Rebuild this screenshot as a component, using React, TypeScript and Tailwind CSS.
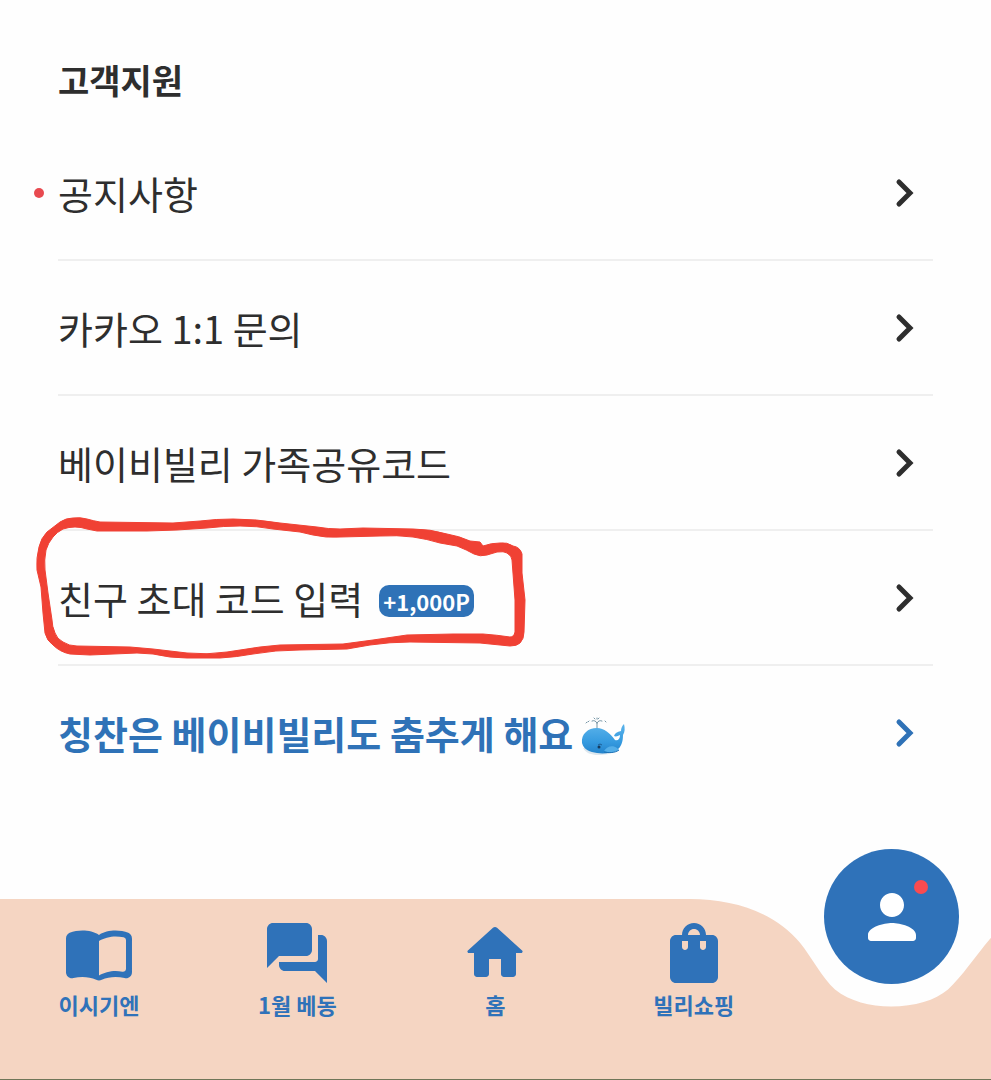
import React from "react";

const WhaleIcon = () => (
	<svg
		viewBox="0 0 44 40"
		className="mt-1.5 ml-2 h-10 w-11 shrink-0"
		role="img"
		aria-label="고래"
	>
		<defs>
			<linearGradient id="whale-body" x1="0" y1="0" x2="0" y2="1">
				<stop offset="0" stopColor="#5bb3ea" />
				<stop offset="0.6" stopColor="#369be0" />
				<stop offset="1" stopColor="#2383cc" />
			</linearGradient>
		</defs>
		<path
			d="M16 12V7M16 7C15 5 13 4 11 5M16 7C17 5 19 4 21 5M8 5l-1 1M24 5l1 1M13 2l1 1M18 2l-1 1M5 7l1-1M16 3V2"
			fill="none"
			stroke="#7796a6"
			strokeWidth="1"
			strokeLinecap="round"
		/>
		<path d="M2 32C5 37 10 39 17 39c7 0 13-1 17-4L24 31z" fill="#dde7ee" />
		<path
			d="M1 27C0 18 7 12 16 12c7 0 13 5 18 12 3 1 5-1 5-5-2 1-4 2-6 1 1-3 3-4 7-5 0-3 1-5 3-7 1 4 1 8-1 11 0 7-2 12-6 15-5 3-13 4-20 3C9 36 3 34 1 27z"
			fill="url(#whale-body)"
		/>
		<path d="M23 35c3-5 9-6 13-3l2 2c-4 3-10 3-15 1z" fill="#54aee8" />
		<path d="M23 36c5 1 11 1 15-2" fill="none" stroke="#1d72b6" />
		<path d="M17 29q2-2 4 0" fill="none" stroke="#1f5f96" />
		<circle cx="18" cy="31" r="1.5" fill="#173b5c" />
	</svg>
);

const ChevronIcon = () => (
	<svg viewBox="0 0 20 30" className="h-[30px] w-5 shrink-0" aria-hidden="true">
		<path
			d="M4 4l11 11L4 26"
			fill="none"
			stroke="currentColor"
			strokeWidth="5"
			strokeLinecap="round"
		/>
	</svg>
);

// hand drawn loop around the invite code row
const MarkerLoop = () => (
	<svg
		viewBox="30 510 500 155"
		className="pointer-events-none absolute -left-7 -top-[21px] h-[155px] w-[500px] max-w-none"
		aria-hidden="true"
	>
		<path
			fill="#f04134"
			stroke="#f04134"
			strokeWidth="1"
			strokeLinejoin="round"
			fillRule="evenodd"
			d="M73 518Q66 518 60 522L47 532Q41 538 39 547 36 558 37 570L41 587 43 613 45 633Q47 641 53 645 60 652 70 654L90 655 137 653 153 654Q170 658 187 658L220 658Q237 657 253 654 275 650 300 650L347 649 370 645Q390 642 410 642L480 643 510 646Q517 646 520 643 524 639 524 632L525 600 522 573V554Q520 547 513 546 507 542 500 543 491 543 483 546L480 542 470 541Q459 536 447 534 430 529 413 529L363 528 340 529Q328 529 317 527L280 523Q256 519 233 519 216 519 200 521L173 523 100 522Q94 521 87 519 80 517 73 518Z
			M75 527Q81 527 87 529L97 531 147 531 177 530 207 528Q224 526 240 526 257 526 273 529L300 532 313 535Q326 538 340 537L380 536Q397 535 413 537 427 539 440 543L457 546Q467 550 474 554 480 557 487 555L497 552Q504 551 507 553 512 556 512 560L515 600V632Q514 637 510 637 497 635 483 634L453 634 407 635 373 640 343 644 280 645 260 647 227 652Q207 655 187 653L153 649 130 647 77 646Q69 646 63 642 57 639 55 633 52 626 52 620L48 593 45 570Q44 560 46 550 48 543 53 537 57 532 63 529 69 527 75 527Z"
		/>
	</svg>
);

const BookIcon = () => (
	<svg viewBox="0 0 24 24" className="size-[72px]" fill="currentColor" aria-hidden="true">
		<path d="M17.5 4.5c-1.95 0-4.05.4-5.5 1.5-1.45-1.1-3.55-1.5-5.5-1.5-1.45 0-2.99.22-4.28.79C1.49 5.62 1 6.33 1 7.14v11.28c0 1.3 1.22 2.26 2.48 1.94.98-.25 2.02-.36 3.02-.36 1.56 0 3.22.26 4.56.92.6.3 1.28.3 1.87 0 1.34-.67 3-.92 4.56-.92 1 0 2.04.11 3.02.36 1.26.33 2.48-.63 2.48-1.94V7.14c0-.81-.49-1.52-1.22-1.85-1.28-.57-2.82-.79-4.27-.79zM21 17.23c0 .63-.58 1.09-1.2.98-.75-.14-1.53-.2-2.3-.2-1.7 0-4.15.65-5.5 1.5V8c1.35-.85 3.8-1.5 5.5-1.5.92 0 1.83.09 2.7.28.46.1.8.51.8.98v9.47z" />
	</svg>
);

const ChatIcon = () => (
	<svg viewBox="0 0 24 24" className="size-[72px]" fill="currentColor" aria-hidden="true">
		<path d="M20 6h-1v8c0 .55-.45 1-1 1H6v1c0 1.1.9 2 2 2h10l4 4V8c0-1.1-.9-2-2-2zm-3 5V4c0-1.1-.9-2-2-2H4c-1.1 0-2 .9-2 2v13l4-4h9c1.1 0 2-.9 2-2z" />
	</svg>
);

const HomeIcon = () => (
	<svg viewBox="0 0 24 24" className="size-[72px]" fill="currentColor" aria-hidden="true">
		<path d="M10 19v-5h4v5c0 .55.45 1 1 1h3c.55 0 1-.45 1-1v-7h1.7c.46 0 .68-.57.33-.87L12.67 3.6c-.38-.34-.96-.34-1.34 0l-8.36 7.53c-.34.3-.13.87.33.87H5v7c0 .55.45 1 1 1h3c.55 0 1-.45 1-1z" />
	</svg>
);

const BagIcon = () => (
	<svg viewBox="0 0 24 24" className="size-[72px]" fill="currentColor" aria-hidden="true">
		<path d="M18 6h-2c0-2.21-1.79-4-4-4S8 3.79 8 6H6c-1.1 0-2 .9-2 2v12c0 1.1.9 2 2 2h12c1.1 0 2-.9 2-2V8c0-1.1-.9-2-2-2zm-8 4c0 .55-.45 1-1 1s-1-.45-1-1V8h2v2zm2-6c1.1 0 2 .9 2 2h-4c0-1.1.9-2 2-2zm4 6c0 .55-.45 1-1 1s-1-.45-1-1V8h2v2z" />
	</svg>
);

const PersonIcon = () => (
	<svg viewBox="0 0 24 24" className="size-[72px]" fill="currentColor" aria-hidden="true">
		<path d="M12 12c2.21 0 4-1.79 4-4s-1.79-4-4-4-4 1.79-4 4 1.79 4 4 4zm0 2c-2.67 0-8 1.34-8 4v1c0 .55.45 1 1 1h14c.55 0 1-.45 1-1v-1c0-2.66-5.33-4-8-4z" />
	</svg>
);

const menu = [
	{ label: "공지사항", isNew: true },
	{ label: "카카오 1:1 문의" },
	{ label: "베이비빌리 가족공유코드" },
	{ label: "친구 초대 코드 입력", badge: "+1,000P", marked: true },
	{ label: "칭찬은 베이비빌리도 춤추게 해요", whale: true },
];

const tabs = [
	{ label: "이시기엔", icon: <BookIcon /> },
	{ label: "1월 베동", icon: <ChatIcon /> },
	{ label: "홈", icon: <HomeIcon /> },
	{ label: "빌리쇼핑", icon: <BagIcon /> },
];

const App = () => {
	return (
		<div className="flex min-h-screen flex-col bg-[#fefefe] font-['Noto_Sans_CJK_KR',sans-serif] text-[#2e2e2e]">
			<main className="flex-1 px-[58px] pt-14">
				<h1 className="text-[34px] leading-[48px] font-bold">고객지원</h1>
				<ul className="pt-[22px]">
					{menu.map((item) => (
						<li
							key={item.label}
							className="relative border-b-2 border-[#efefef] last:border-b-0"
						>
							<a
								href="#"
								className={
									item.whale
										? "flex h-[133px] items-center justify-between pr-[18px] font-bold text-[#2f72b7]"
										: "flex h-[133px] items-center justify-between pr-[18px]"
								}
							>
								<span className="flex items-center text-[38px] leading-[56px]">
									{item.label}
									{item.badge && (
										<span className="mt-1.5 ml-4 rounded-[10px] bg-[#2f72b7] px-1 text-[22px] leading-8 font-bold text-white">
											{item.badge}
										</span>
									)}
									{item.whale && <WhaleIcon />}
								</span>
								<ChevronIcon />
							</a>
							{item.isNew && (
								<span className="absolute top-[62px] -left-6 size-[10px] rounded-full bg-[#e84a50]" />
							)}
							{item.marked && <MarkerLoop />}
						</li>
					))}
				</ul>
			</main>

			<nav className="relative h-[181px] border-b border-[#6f7658]">
				<svg
					viewBox="0 0 991 181"
					preserveAspectRatio="none"
					className="absolute inset-0 size-full"
					aria-hidden="true"
				>
					<path
						fill="#f5d5c2"
						d="M0 0H690C735 0 775 14 800 44 812 59 822 79 835 91 850 103 870 108 891 108 915 108 935 102 948 91 962 78 975 58 991 39V181H0Z"
					/>
				</svg>
				<div className="relative grid grid-cols-5 pt-[18px] text-[#2f72b9]">
					{tabs.map((tab) => (
						<a key={tab.label} href="#" className="flex flex-col items-center">
							{tab.icon}
							<span className="text-[22px] leading-[30px] font-bold">{tab.label}</span>
						</a>
					))}
					<div className="-mt-[68px] flex justify-center">
						<button
							type="button"
							aria-label="내 정보"
							className="relative flex size-[135px] cursor-pointer items-center justify-center rounded-full bg-[#2f72b9] text-white"
						>
							<PersonIcon />
							<span className="absolute top-[31px] right-[31px] size-[14px] rounded-full bg-[#fa4b50]" />
						</button>
					</div>
				</div>
			</nav>
		</div>
	);
};

export default App;
